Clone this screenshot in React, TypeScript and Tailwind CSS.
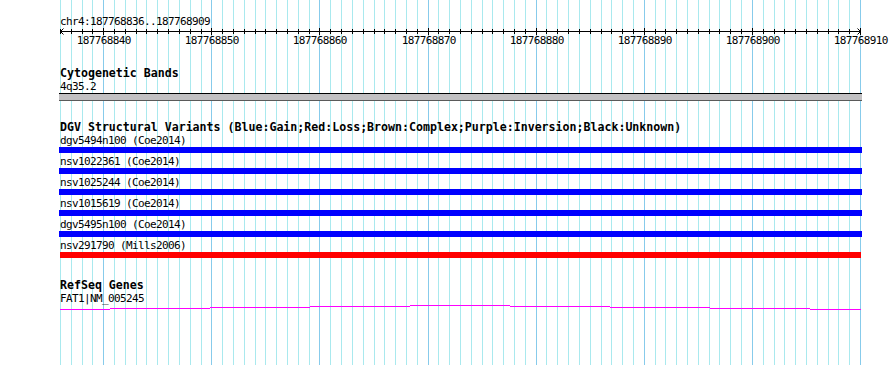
import React from "react";

const START = 187768836;
const BASES = 74;
const LEFT = 60;
const SPAN = 800;

const xAt = (i: number) => Math.round(LEFT + (i * SPAN) / BASES);

const variants = [
  { name: "dgv5494n100 (Coe2014)", color: "blue" },
  { name: "nsv1022361 (Coe2014)", color: "blue" },
  { name: "nsv1025244 (Coe2014)", color: "blue" },
  { name: "nsv1015619 (Coe2014)", color: "blue" },
  { name: "dgv5495n100 (Coe2014)", color: "blue" },
  { name: "nsv291790 (Mills2006)", color: "red" },
];

// intron "hat" line, drawn as the stepped 1px line the browser image shows
const geneSteps = [
  { x1: 60, x2: 110, y: 4 },
  { x1: 110, x2: 210, y: 3 },
  { x1: 210, x2: 310, y: 2 },
  { x1: 310, x2: 410, y: 1 },
  { x1: 410, x2: 510, y: 0 },
  { x1: 510, x2: 610, y: 1 },
  { x1: 610, x2: 710, y: 2 },
  { x1: 710, x2: 810, y: 3 },
  { x1: 810, x2: 861, y: 4 },
];

const Grid = () => {
  const lines = [];
  for (let i = 0; i <= BASES; i++) {
    const major = (START + i) % 10 === 0;
    lines.push(
      <rect
        key={i}
        x={xAt(i)}
        y={0}
        width={1}
        height={365}
        fill={major ? "#87cbeb" : "#a9e9ee"}
      />
    );
  }
  return (
    <svg className="absolute inset-0" width={890} height={365} shapeRendering="crispEdges">
      {lines}
    </svg>
  );
};

const Ruler = () => {
  const ticks = [];
  const labels = [];
  for (let i = 0; i <= BASES; i++) {
    const major = (START + i) % 10 === 0;
    const x = xAt(i);
    ticks.push(
      <rect key={i} x={x} y={major ? 0 : 1} width={1} height={major ? 7 : 5} fill="black" />
    );
    if (major) {
      labels.push(
        <text
          key={"l" + i}
          x={x + 0.8}
          y={16}
          textAnchor="middle"
          fontSize={11}
          letterSpacing={-0.62}
          fontFamily="'DejaVu Sans Mono', monospace"
          fill="black"
        >
          {START + i}
        </text>
      );
    }
  }
  return (
    <svg className="block" width={890} height={20}>
      <g shapeRendering="crispEdges">
        <rect x={60} y={3} width={801} height={1} fill="black" />
        {ticks}
      </g>
      <polyline points="63.5,0.5 60.5,3.5 63.5,6.5" fill="none" stroke="black" strokeWidth={1} />
      <polyline points="857.5,0.5 860.5,3.5 857.5,6.5" fill="none" stroke="black" strokeWidth={1} />
      {labels}
    </svg>
  );
};

const Title = ({ children }: { children: React.ReactNode }) => (
  <div className="h-[13px] pl-[60px] text-[11.6px] leading-[13px] font-bold text-black whitespace-nowrap">
    {children}
  </div>
);

const Label = ({ children }: { children: React.ReactNode }) => (
  <div className="h-[13px] pl-[60px] text-[11px] leading-[13px] tracking-[-0.62px] text-black whitespace-nowrap">
    {children}
  </div>
);

export default function App() {
  return (
    <div
      className="relative w-[890px] h-[365px] bg-white overflow-hidden"
      style={{ fontFamily: "'DejaVu Sans Mono', 'Liberation Mono', monospace" }}
    >
      <Grid />
      <div className="relative flex flex-col">
        <div className="pt-[15px]">
          <Label>chr4:187768836..187768909</Label>
        </div>
        <Ruler />

        <div className="mt-[19px]">
          <Title>Cytogenetic Bands</Title>
          <Label>4q35.2</Label>
          <div className="ml-[59px] w-[803px] h-[8px] bg-[#c2c0c2] border-t border-b border-t-black border-b-[#5a5a5a]" />
        </div>

        <div className="mt-[20px]">
          <Title>DGV Structural Variants (Blue:Gain;Red:Loss;Brown:Complex;Purple:Inversion;Black:Unknown)</Title>
          {variants.map((v) => (
            <div key={v.name} className="mb-[2px]">
              <Label>{v.name}</Label>
              {v.color === "blue" ? (
                <div className="ml-[59px] w-[803px] h-[6px] bg-[#0000ff]" />
              ) : (
                <div className="ml-[60px] w-[801px] h-[6px] bg-[#ff0000]" />
              )}
            </div>
          ))}
        </div>

        <div className="mt-[19px]">
          <Title>RefSeq Genes</Title>
          <Label>FAT1|NM_005245</Label>
          <svg className="block" width={890} height={5} shapeRendering="crispEdges">
            {geneSteps.map((s) => (
              <rect key={s.x1} x={s.x1} y={s.y} width={s.x2 - s.x1} height={1} fill="#ff00ff" />
            ))}
          </svg>
        </div>
      </div>
    </div>
  );
}
